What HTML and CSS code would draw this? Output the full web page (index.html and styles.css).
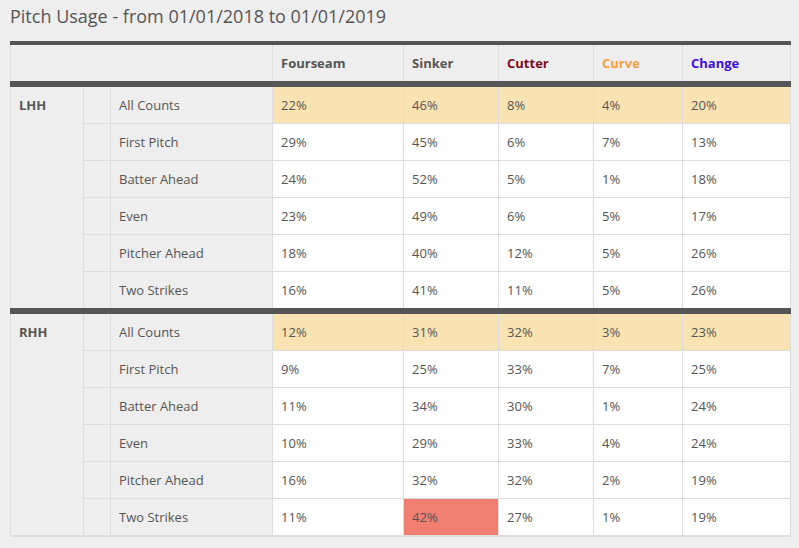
FILE: index.html
```html
<!DOCTYPE html>
<html>
<head>
<meta charset="utf-8">
<link rel="stylesheet" href="styles.css">
</head>
<body>
<h1 class="title">Pitch Usage - from 01/01/2018 to 01/01/2019</h1>
<table class="usage">
  <colgroup>
    <col class="c-side"><col class="c-blank"><col class="c-label">
    <col class="c-four"><col class="c-sink"><col class="c-cut"><col class="c-curve"><col class="c-change">
  </colgroup>
  <thead>
    <tr>
      <th colspan="3" class="grey"></th>
      <th class="grey">Fourseam</th>
      <th class="grey">Sinker</th>
      <th class="grey cutter">Cutter</th>
      <th class="grey curve">Curve</th>
      <th class="grey change">Change</th>
    </tr>
  </thead>
  <tbody>
    <tr class="hl"><td rowspan="6" class="side">LHH</td><td class="grey"></td><td class="grey">All Counts</td><td>22%</td><td>46%</td><td>8%</td><td>4%</td><td>20%</td></tr>
    <tr><td class="grey"></td><td class="grey">First Pitch</td><td>29%</td><td>45%</td><td>6%</td><td>7%</td><td>13%</td></tr>
    <tr><td class="grey"></td><td class="grey">Batter Ahead</td><td>24%</td><td>52%</td><td>5%</td><td>1%</td><td>18%</td></tr>
    <tr><td class="grey"></td><td class="grey">Even</td><td>23%</td><td>49%</td><td>6%</td><td>5%</td><td>17%</td></tr>
    <tr><td class="grey"></td><td class="grey">Pitcher Ahead</td><td>18%</td><td>40%</td><td>12%</td><td>5%</td><td>26%</td></tr>
    <tr><td class="grey"></td><td class="grey">Two Strikes</td><td>16%</td><td>41%</td><td>11%</td><td>5%</td><td>26%</td></tr>
  </tbody>
  <tbody>
    <tr class="hl"><td rowspan="6" class="side">RHH</td><td class="grey"></td><td class="grey">All Counts</td><td>12%</td><td>31%</td><td>32%</td><td>3%</td><td>23%</td></tr>
    <tr><td class="grey"></td><td class="grey">First Pitch</td><td>9%</td><td>25%</td><td>33%</td><td>7%</td><td>25%</td></tr>
    <tr><td class="grey"></td><td class="grey">Batter Ahead</td><td>11%</td><td>34%</td><td>30%</td><td>1%</td><td>24%</td></tr>
    <tr><td class="grey"></td><td class="grey">Even</td><td>10%</td><td>29%</td><td>33%</td><td>4%</td><td>24%</td></tr>
    <tr><td class="grey"></td><td class="grey">Pitcher Ahead</td><td>16%</td><td>32%</td><td>32%</td><td>2%</td><td>19%</td></tr>
    <tr><td class="grey"></td><td class="grey">Two Strikes</td><td>11%</td><td class="hot">42%</td><td>27%</td><td>1%</td><td>19%</td></tr>
  </tbody>
</table>
</body>
</html>
```

FILE: styles.css
```css
html, body {
  margin: 0;
  padding: 0;
  background: #eeeeee;
}
body {
  font-family: "Open Sans", "Liberation Sans", sans-serif;
  color: #555555;
  padding: 4px 9px 0 10px;
}
.title {
  margin: 0;
  font-size: 18px;
  font-weight: normal;
  line-height: 24px;
  color: #555555;
}
.usage {
  margin-top: 13px;
  width: 780px;
  table-layout: fixed;
  border-collapse: collapse;
  border: 1px solid #dddddd;
  font-size: 13px;
  background: #ffffff;
}
.c-side { width: 73px; }
.c-blank { width: 27px; }
.c-label { width: 162px; }
.c-four { width: 131px; }
.c-sink { width: 95px; }
.c-cut { width: 95px; }
.c-curve { width: 89px; }
.c-change { width: 108px; }

.usage thead tr {
  border-top: 4px solid #555555;
  border-bottom: 6px solid #555555;
}
.usage tbody + tbody {
  border-top: 6px solid #555555;
}
.usage th, .usage td {
  text-align: left;
  padding: 8px 8px;
  line-height: 20px;
  height: 20px;
  border: 1px solid #dddddd;
  vertical-align: middle;
}
.usage thead th {
  border-top: 4px solid #555555;
  border-bottom: 6px solid #555555;
  font-weight: bold;
  color: #555555;
}
.usage tbody:first-of-type tr:last-child td,
.usage tbody:first-of-type td.side {
  border-bottom: 6px solid #555555;
}
.usage tbody + tbody tr:first-child td {
  border-top: 6px solid #555555;
}
.usage tbody:last-of-type tr:last-child td,
.usage tbody:last-of-type td.side {
  border-bottom: 2px solid #dddddd;
}
.grey { background: #eeeeee; }
.side {
  background: #eeeeee;
  vertical-align: top !important;
  font-weight: bold;
}
.cutter { color: #7b0d1e !important; }
.curve { color: #f2a043 !important; }
.change { color: #3a0ee8 !important; }
.hl td:not(.grey):not(.side) { background: #fae3b3; }
.hot { background: #f07f72; }
```
